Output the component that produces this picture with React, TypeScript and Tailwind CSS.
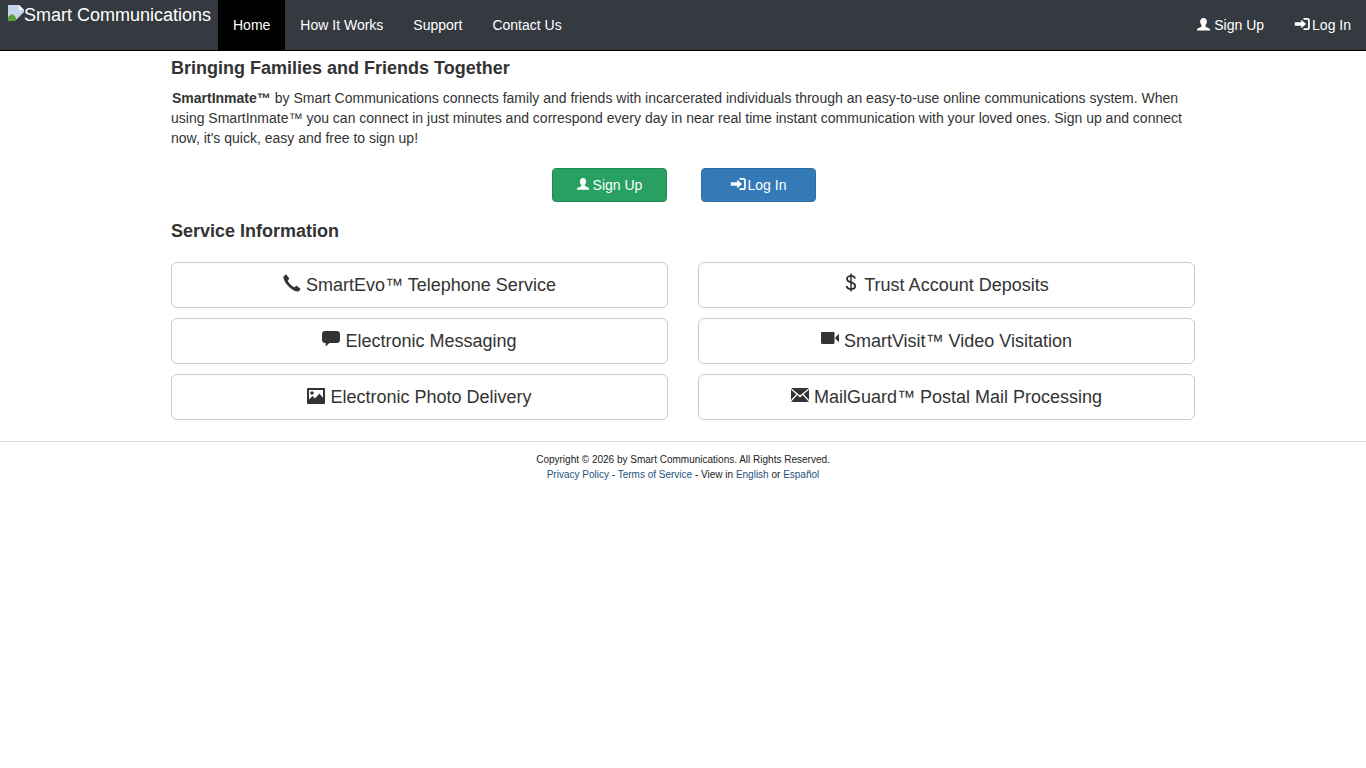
import React from 'react';

type IconProps = { className?: string };

const UserIcon = ({ className }: IconProps) => (
  <svg className={className} viewBox="0 0 16 16" fill="currentColor">
    <path d="M8 1c2.2 0 3.6 1.6 3.6 3.9 0 1.6-.7 3-1.5 3.8v1.1c0 .5.3.8 1 1.1 1.7.6 3.9 1.2 3.9 2.6V14.5H1v-.9c0-1.4 2.2-2 3.9-2.6.7-.3 1-.6 1-1.1V8.700C5.100 7.900 4.400 6.500 4.400 4.900 4.400 2.600 5.800 1 8 1z" />
  </svg>
);

const LoginIcon = ({ className }: IconProps) => (
  <svg className={className} viewBox="0 0 16 16" fill="currentColor">
    <path d="M9.500 2H13.500C14.900 2 15.800 2.900 15.800 4.300V11.700C15.800 13.100 14.900 14 13.500 14H9.500V12.300H13C13.600 12.300 14 11.900 14 11.300V4.700C14 4.100 13.600 3.700 13 3.700H9.500z" />
    <path d="M7.200 3.800 12.200 8 7.200 12.200V9.800H.8V6.200H7.200z" />
  </svg>
);

const PhoneIcon = ({ className }: IconProps) => (
  <svg className={className} viewBox="0 0 16 16" fill="currentColor">
    <path d="M3.200.8 5.300 3.600C5.600 4 5.500 4.400 5.200 4.700L4.200 5.700C4.800 7.700 8.300 11.200 10.300 11.800L11.300 10.800C11.600 10.500 12 10.400 12.400 10.700L15.200 12.800C15.600 13.100 15.600 13.600 15.300 13.900L13.600 15.600C11.500 15.900 7.700 13.700 5 11 2.300 8.300.1 4.500.4 2.400L2.100.7C2.400.4 2.900.4 3.200.8z" />
  </svg>
);

const DollarIcon = ({ className }: IconProps) => (
  <svg className={className} viewBox="0 0 16 22" fill="none" stroke="currentColor" strokeWidth="2.100">
    <path d="M12.500 6.600C12.300 4.500 10.500 3.500 8 3.500 5.500 3.500 3.400 4.700 3.400 7 3.400 9.300 5.400 10 8 10.800 10.700 11.600 12.800 12.400 12.800 14.900 12.800 17.300 10.600 18.400 8 18.400 5.200 18.400 3.200 17.200 3 14.800" />
    <path d="M8 .8V21.200" strokeWidth="1.700" />
  </svg>
);

const CommentIcon = ({ className }: IconProps) => (
  <svg className={className} viewBox="0 0 18 16" fill="currentColor">
    <path d="M3 0H15C16.600 0 18 1.300 18 3V9C18 10.700 16.600 12 15 12H7.500L3.700 15.500V12H3C1.400 12 0 10.700 0 9V3C0 1.300 1.400 0 3 0z" />
  </svg>
);

const VideoIcon = ({ className }: IconProps) => (
  <svg className={className} viewBox="0 0 18 12" fill="currentColor">
    <path d="M0 1.200C0 .5.500 0 1.200 0H12.300C13 0 13.500.5 13.500 1.200V10.800C13.500 11.500 13 12 12.300 12H1.200C.5 12 0 11.500 0 10.800z" />
    <path d="M14.300 5.500 18 1.800V10.200L14.300 6.500z" />
  </svg>
);

const PictureIcon = ({ className }: IconProps) => (
  <svg className={className} viewBox="0 0 18 16" fill="currentColor" fillRule="evenodd">
    <path d="M1 0H17C17.600 0 18 .4 18 1V15C18 15.600 17.600 16 17 16H1C.4 16 0 15.600 0 15V1C0 .4.4 0 1 0zM2 2V11.500L5.500 8 8 10.500 12.500 5.500 16 10V2zM5 3.200A1.800 1.800 0 1 1 5 6.800 1.800 1.800 0 0 1 5 3.200z" />
  </svg>
);

const EnvelopeIcon = ({ className }: IconProps) => (
  <svg className={className} viewBox="0 0 18 14" fill="currentColor">
    <path d="M0 0H18L9 7.600z" />
    <path d="M0 1.600 5.300 6.200 0 12z" />
    <path d="M18 1.600 12.700 6.200 18 12z" />
    <path d="M6.300 7.100 9 9.400 11.700 7.100 18 14H0z" />
  </svg>
);

const BrokenImage = () => (
  <svg className="w-4 h-4 shrink-0" viewBox="0 0 16 16">
    <path d="M0 0H11L16 5V16H0z" fill="#c6d6ea" />
    <path d="M0 16V12L4 9 7 11 9 16z" fill="#5a9e3e" />
    <path d="M11 0V5H16z" fill="#ffffff" />
    <path d="M7 16 16 7V16z" fill="#343a40" />
  </svg>
);

const navLinks = ['Home', 'How It Works', 'Support', 'Contact Us'];

const services = [
  { label: 'SmartEvo™ Telephone Service', icon: <PhoneIcon className="w-[18px] h-[18px] mb-[5px]" /> },
  { label: 'Trust Account Deposits', icon: <DollarIcon className="w-[14px] h-[21px] mb-[5px] mr-[1px]" /> },
  { label: 'Electronic Messaging', icon: <CommentIcon className="w-[18px] h-4 mb-[4px]" /> },
  { label: 'SmartVisit™ Video Visitation', icon: <VideoIcon className="w-[18px] h-3 mb-[6px]" /> },
  { label: 'Electronic Photo Delivery', icon: <PictureIcon className="w-[18px] h-4 mb-[3px]" /> },
  { label: 'MailGuard™ Postal Mail Processing', icon: <EnvelopeIcon className="w-[18px] h-[14px] mb-[5px]" /> },
];

export default function App() {
  return (
    <div className="min-h-[768px] bg-white text-[14px] leading-[20px] text-[#333333] font-['Liberation_Sans',Arial,sans-serif]">
      {/* Navbar */}
      <nav className="h-[51px] bg-[#343a40] border-b border-black flex justify-between text-white">
        <div className="flex">
          <a className="flex items-start w-[218px] pl-2 pt-[5px] text-[18px] leading-[20px]">
            <BrokenImage />
            <span>Smart Communications</span>
          </a>
          {navLinks.map((link, i) => (
            <a key={link} className={`h-[50px] px-[15px] flex items-center ${i === 0 ? 'bg-black' : ''}`}>
              {link}
            </a>
          ))}
        </div>
        <div className="flex">
          <a className="h-[50px] px-[15px] flex items-center gap-[3px]">
            <UserIcon className="w-[15px] h-[15px] mb-[2px]" />
            Sign Up
          </a>
          <a className="h-[50px] px-[15px] flex items-center gap-[2px]">
            <LoginIcon className="w-4 h-4 mb-[2px]" />
            Log In
          </a>
        </div>
      </nav>

      {/* Content */}
      <main className="w-[1024px] ml-[171px]">
        <h3 className="mt-[7px] mb-[10px] text-[18px] leading-[20px] font-bold">Bringing Families and Friends Together</h3>
        <p className="mb-5">
          <strong className="ml-[1px]">SmartInmate™</strong> by Smart Communications connects family and friends with incarcerated individuals through an easy-to-use online communications system. When using SmartInmate™ you can connect in just minutes and correspond every day in near real time instant communication with your loved ones. Sign up and connect now, it's quick, easy and free to sign up!
        </p>
        <div className="flex justify-center gap-[34px] ml-[1px]">
          <a className="w-[115px] h-[34px] flex items-center justify-center gap-[3px] rounded-[4px] border border-[#1f8a57] bg-[#28a061] text-white">
            <UserIcon className="w-[14px] h-[14px] mb-[2px]" />
            Sign Up
          </a>
          <a className="w-[115px] h-[34px] flex items-center justify-center gap-[2px] rounded-[4px] border border-[#2e6da4] bg-[#337ab7] text-white">
            <LoginIcon className="w-4 h-4 mb-[2px]" />
            Log In
          </a>
        </div>
        <h3 className="mt-[19px] mb-[21px] text-[18px] leading-[20px] font-bold">Service Information</h3>
        <div className="grid grid-cols-2 gap-x-[30px] gap-y-[10px]">
          {services.map((service) => (
            <a
              key={service.label}
              className="h-[46px] flex items-center justify-center gap-[5px] rounded-[6px] border border-[#cccccc] bg-white text-[18px] leading-[24px]"
            >
              {service.icon}
              {service.label}
            </a>
          ))}
        </div>
      </main>

      {/* Footer */}
      <footer className="mt-[21px] border-t border-[#dddddd] pt-[10px] text-center text-[10px] leading-[15px] text-[#222222]">
        <div>Copyright © 2026 by Smart Communications. All Rights Reserved.</div>
        <div>
          <a className="text-[#23527c]">Privacy Policy</a> - <a className="text-[#23527c]">Terms of Service</a> - View in <a className="text-[#23527c]">English</a> or <a className="text-[#23527c]">Español</a>
        </div>
      </footer>
    </div>
  );
}
